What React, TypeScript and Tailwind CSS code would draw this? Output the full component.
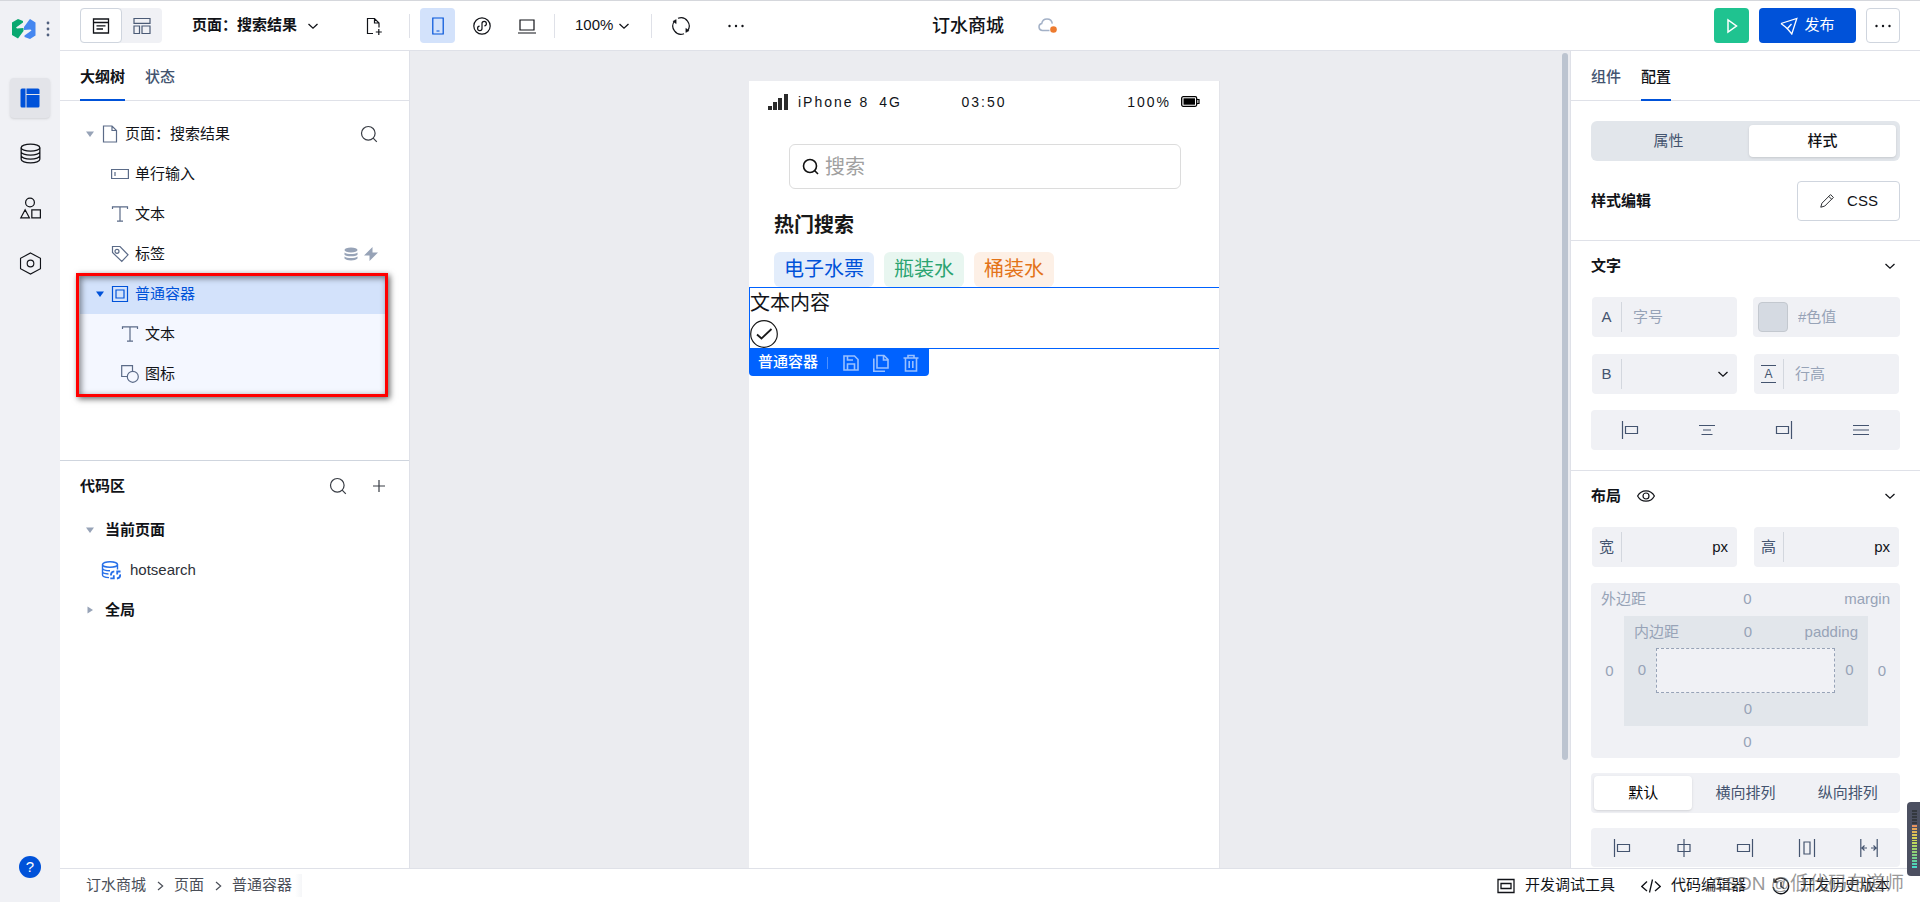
import React from 'react';

type IconProps = { className?: string; size?: number; children: React.ReactNode; w?: number };

const Icon: React.FC<IconProps> = ({ className = '', size = 18, w = 1.2, children }) => (
  <svg
    width={size}
    height={size}
    viewBox="0 0 18 18"
    fill="none"
    stroke="currentColor"
    strokeWidth={w}
    className={`shrink-0 ${className}`}
    aria-hidden="true"
  >
    {children}
  </svg>
);

const Chevron = () => (
  <svg width="12" height="12" viewBox="0 0 12 12" fill="none" stroke="currentColor" strokeWidth="1.3" className="shrink-0" aria-hidden="true">
    <path d="M1.5 4 6 8.2 10.5 4" />
  </svg>
);

const Caret: React.FC<{ right?: boolean; className?: string }> = ({ right, className = '' }) => (
  <svg width="10" height="10" viewBox="0 0 10 10" fill="currentColor" className={`shrink-0 ${className}`} aria-hidden="true">
    {right ? <path d="M2.500 1.500v7L8 5z" /> : <path d="M1 2.500h8L5 8z" />}
  </svg>
);

const SearchIcon = ({ w = 1.2 }: { w?: number }) => (
  <Icon w={w}>
    <circle cx="8.300" cy="8.300" r="6.800" />
    <path d="m13.200 13.200 3.600 3.600" />
  </Icon>
);

const FileIcon = () => (
  <Icon>
    <path d="M2.500 1h8.500l4.500 4.500V17h-13zM11 1v4.500h4.500" />
  </Icon>
);

const TextIcon = () => (
  <Icon>
    <path d="M1.500 4V1.800h15V4M9 1.800v14.400M6 16.200h6" />
  </Icon>
);

const Dots = () => (
  <svg width="18" height="4" viewBox="0 0 18 4" fill="currentColor" aria-hidden="true">
    <circle cx="2.500" cy="2" r="1.200" />
    <circle cx="9" cy="2" r="1.200" />
    <circle cx="15.500" cy="2" r="1.200" />
  </svg>
);

const Database: React.FC<{ size?: number }> = ({ size = 20 }) => (
  <Icon size={size} w={1.1}>
    <ellipse cx="9" cy="4" rx="8" ry="3" />
    <path d="M1 4v10c0 1.600 3.600 3 8 3s8-1.400 8-3V4M1 7.400c0 1.600 3.600 3 8 3s8-1.400 8-3M1 10.800c0 1.600 3.600 3 8 3s8-1.400 8-3" />
  </Icon>
);

const AlignLeft = () => (
  <Icon>
    <path d="M1.500 0v18M4.500 5.500h12v7h-12z" />
  </Icon>
);

const AlignRight = () => (
  <Icon>
    <path d="M16.500 0v18M1.500 5.500h12v7h-12z" />
  </Icon>
);

const SideRail = () => (
  <nav className="w-15 shrink-0 bg-[#f0f1f5] flex flex-col items-center">
    <div className="w-full h-11 mt-1.5 flex items-center pl-3 gap-2.5">
      <svg width="24" height="20" viewBox="0 0 24 20" aria-hidden="true">
        <path d="M0 3.500 6 0l5 2v1.500L4 8.500l1 1 6.500-.5v3L6 19.500 0 16z" fill="#09a870" />
        <path d="M23.500 16.500 18 20l-5.500-2v-1.500l7-5-1-1-6.500.5V8l5.500-7.500L18 0l5.500 3.500z" fill="#4587f0" />
      </svg>
      <svg width="4" height="16" viewBox="0 0 4 16" fill="#50607e" aria-hidden="true">
        <circle cx="2" cy="2" r="1.400" />
        <circle cx="2" cy="8" r="1.400" />
        <circle cx="2" cy="14" r="1.400" />
      </svg>
    </div>
    <div className="mt-[27px] flex flex-col gap-[15px]">
      <button aria-label="页面" className="size-10 rounded bg-[#e3e4e9] shadow flex items-center justify-center text-[#0052d9]">
        <svg width="20" height="20" viewBox="0 0 20 20" fill="currentColor" aria-hidden="true">
          <path d="M2 .5h3.500v19H2a1.500 1.500 0 0 1-1.500-1.500V2A1.500 1.500 0 0 1 2 .5zM6.500.500H18A1.500 1.500 0 0 1 19.500 2v4h-13zM6.500 7h13v11a1.500 1.500 0 0 1-1.500 1.500H6.500z" />
        </svg>
      </button>
      <button aria-label="数据源" className="size-10 flex items-center justify-center">
        <Database size={21} />
      </button>
      <button aria-label="素材" className="size-10 flex items-center justify-center">
        <Icon size={22} w={1}>
          <circle cx="9" cy="4.500" r="3.600" />
          <path d="M5 10.500 8.500 17h-7zM10.500 10.500h7V17h-7z" />
        </Icon>
      </button>
      <button aria-label="设置" className="size-10 flex items-center justify-center">
        <Icon size={23} w={0.9}>
          <path d="m9 .8 7.800 4.100v8.200L9 17.200l-7.800-4.100V4.900z" />
          <circle cx="9" cy="9" r="2.600" />
        </Icon>
      </button>
    </div>
    <button aria-label="帮助" className="mt-auto mb-6 size-[22px] rounded-full bg-[#0052d9] text-white text-[15px] leading-[22px]">?</button>
  </nav>
);

const Divider = () => <span className="w-px h-6 bg-[#dfe1e8]" />;

const Header = () => (
  <header className="h-[50px] shrink-0 border-b border-[#dfe1e8] bg-white flex items-center px-5">
    <div className="flex-1 flex items-center">
      <div className="flex h-[35px] rounded bg-[#f0f1f5]">
        <button aria-label="列表视图" className="w-[42px] rounded border border-[#cfd5de] bg-white flex items-center justify-center">
          <Icon w={1.3}>
            <path d="M1.500 2h15v14h-15zM1.500 5.500h15M4.500 8.800h9M4.500 12h6.500" />
          </Icon>
        </button>
        <button aria-label="布局视图" className="w-10 flex items-center justify-center text-[#4b5b76]">
          <Icon>
            <path d="M1 1.500h16v4.800H1zM1 9h5.500v7.500H1zM9 9h8v7.500H9z" />
          </Icon>
        </button>
      </div>
      <label className="ml-[30px] flex items-center gap-2.5">
        <select aria-label="当前页面" className="appearance-none bg-transparent text-[15px] font-semibold w-[105px]">
          <option>页面：搜索结果</option>
        </select>
        <Chevron />
      </label>
      <button aria-label="新建页面" className="ml-[46px] mr-[26px]">
        <Icon>
          <path d="M8 16.500H2.500v-15h7l4.500 4.500v4.500M9.500 1.500V6H14M13.800 12v6M10.800 15h6" />
        </Icon>
      </button>
      <Divider />
      <button aria-label="手机" className="ml-2.5 size-[35px] rounded bg-[#d3e2fb] text-[#0052d9] flex items-center justify-center">
        <Icon>
          <path d="M3.800 1h10.400v16H3.800zM7.500 14h3" />
        </Icon>
      </button>
      <button aria-label="小程序" className="ml-[18px]">
        <Icon>
          <circle cx="9" cy="9" r="8.200" />
          <path d="M6.600 9.200a2.200 2.200 0 1 0 2.400 2.200V6.600a2.200 2.200 0 1 1 2.400 2.200" />
        </Icon>
      </button>
      <button aria-label="电脑" className="ml-[27px] mr-[18px]">
        <Icon>
          <path d="M2 3h14v10H2zM0 16h18" />
        </Icon>
      </button>
      <Divider />
      <label className="ml-5 mr-[21px] flex items-center gap-1">
        <select aria-label="缩放" className="appearance-none bg-transparent text-[15px]">
          <option>100%</option>
        </select>
        <Chevron />
      </label>
      <Divider />
      <button aria-label="刷新" className="ml-5">
        <Icon>
          <path d="M6 1.300A8.200 8.200 0 0 1 15.400 14M12 16.700A8.200 8.200 0 0 1 2.600 4" />
          <path d="M13.800 11.300v4.200l3.300-1.800zM4.200 6.700V2.500L.900 4.300z" fill="currentColor" strokeWidth=".4" />
        </Icon>
      </button>
      <button aria-label="更多操作" className="ml-[37px]">
        <Dots />
      </button>
    </div>
    <div className="pl-2.5 flex items-center gap-[34px]">
      <h1 className="text-lg font-medium">订水商城</h1>
      <svg width="20" height="16" viewBox="0 0 20 16" fill="none" aria-hidden="true">
        <path d="M11.500 12.500H4.500a3.500 3.500 0 0 1-.8-6.900C4.200 2.800 6.300 1 9 1c2.800 0 4.900 1.900 5.300 4.600" stroke="#a3b1c7" strokeWidth="1.500" />
        <circle cx="15.500" cy="11.500" r="3.300" fill="#ed7b2f" />
      </svg>
    </div>
    <div className="flex-1 flex items-center justify-end gap-2.5">
      <button aria-label="预览" className="size-[35px] rounded bg-[#1fc390] text-white flex items-center justify-center">
        <Icon w={1.5}>
          <path d="M5 3v12l8.500-6z" />
        </Icon>
      </button>
      <button className="h-[35px] w-[97px] rounded bg-[#0052d9] text-white text-[15px] flex items-center justify-center gap-1.5">
        <Icon w={1.3}>
          <path d="M1 6.500 16.800 1.500 11.800 17 8.500 13M1 6.500l4.500 3.500M5.500 10l3 3M7.500 11.500 11.500 7" />
        </Icon>
        发布
      </button>
      <button aria-label="更多" className="h-[35px] w-[34px] rounded border border-[#cfd5de] flex items-center justify-center">
        <Dots />
      </button>
    </div>
  </header>
);

const TreeRow: React.FC<{ icon: React.ReactNode; label: string; className?: string; children?: React.ReactNode }> = ({ icon, label, className = 'pl-8', children }) => (
  <li className={`h-10 flex items-center text-[15px] ${className}`}>
    <button className="flex items-center gap-1.5">
      <span className="text-[#5b6b88]">{icon}</span>
      {label}
    </button>
    {children}
  </li>
);

const LeftPanel = () => (
  <aside className="w-[350px] shrink-0 bg-white border-r border-[#dfe1e8] flex flex-col">
    <div className="h-[50px] shrink-0 border-b border-[#dfe1e8] px-5 flex gap-5 text-[15px] font-medium">
      <button className="h-[50px] pt-1 border-b-2 border-[#0052d9] font-semibold">大纲树</button>
      <button className="h-[50px] pt-0.5 text-[#44546f]">状态</button>
    </div>
    <div className="h-[359px] shrink-0 pt-[13px] pl-5 pr-[21px]">
      <ul>
        <li className="h-10 flex items-center pl-[5px] pr-2.5 text-[15px]">
          <Caret className="text-[#97a3b7]" />
          <button className="ml-1.5 flex items-center gap-1.5">
            <span className="text-[#5b6b88]">
              <FileIcon />
            </span>
            页面：搜索结果
          </button>
          <button aria-label="搜索组件" className="ml-auto text-[#383c44]">
            <SearchIcon />
          </button>
        </li>
        <TreeRow
          label="单行输入"
          className="pl-[31px]"
          icon={
            <Icon>
              <path d="M.600 4.500h16.800v9H.600zM4 7v4" />
            </Icon>
          }
        />
        <TreeRow label="文本" className="pl-[31px]" icon={<TextIcon />} />
        <TreeRow
          label="标签"
          className="pl-[31px] pr-2.5"
          icon={
            <Icon>
              <path d="M1.500 1.500h7.500l8 8.300-6.200 6.700-9.300-9z" />
              <circle cx="6" cy="6.300" r="2" />
            </Icon>
          }
        >
          <span className="ml-auto flex gap-1.5 text-[#97a3b7]">
            <svg width="14" height="14" viewBox="0 0 14 14" fill="currentColor" aria-hidden="true">
              <ellipse cx="7" cy="3" rx="6.500" ry="2.600" />
              <path d="M.500 5.500c2.500 2 10.500 2 13 0v2.200c-2 2.200-11 2.200-13 0zM.500 9.500c2.500 2 10.500 2 13 0v2c-2 2.600-11 2.600-13 0z" />
            </svg>
            <svg width="14" height="14" viewBox="0 0 14 14" fill="currentColor" aria-hidden="true">
              <path d="M8.500 0 0 8.500h5.500V14L14 5.500H8.500z" />
            </svg>
          </span>
        </TreeRow>
        <li className="relative">
          <ul>
            <li className="h-10 rounded-t bg-[#d3e2fb] flex items-center pl-[15px] text-[15px] text-[#0052d9]">
              <Caret />
              <button className="ml-1.5 flex items-center gap-1.5">
                <Icon>
                  <path d="M1.500 1.500h15v15h-15zM5 5h8v8H5z" />
                </Icon>
                普通容器
              </button>
            </li>
            <TreeRow label="文本" className="pl-[41px] bg-[#f4f7ff]" icon={<TextIcon />} />
            <TreeRow
              label="图标"
              className="pl-[41px] bg-[#f4f7ff]"
              icon={
                <Icon>
                  <path d="M7 11.500H.700V.700h10.800v6" />
                  <circle cx="11.800" cy="11.800" r="5.500" />
                </Icon>
              }
            />
          </ul>
          <div className="absolute -left-1 right-0 -top-px -bottom-[3px] border-3 border-[#ff0000] shadow-[2px_2px_6px_rgba(0,0,0,0.6),inset_2px_2px_6px_rgba(0,0,0,0.5)] pointer-events-none" />
        </li>
      </ul>
    </div>
    <section className="border-t border-[#cfd5de] flex-1 min-h-0">
      <div className="h-[49px] pt-px pl-5 pr-[21px] flex items-center text-[15px]">
        <h2 className="font-semibold">代码区</h2>
        <button aria-label="搜索代码" className="ml-auto text-[#383c44]">
          <SearchIcon />
        </button>
        <button aria-label="新建" className="ml-[23px] text-[#383c44]">
          <Icon>
            <path d="M9 3v12M3 9h12" />
          </Icon>
        </button>
      </div>
      <ul className="text-[15px]">
        <li className="h-10 pl-[25px] flex items-center gap-2.5 font-semibold">
          <Caret className="text-[#97a3b7]" />
          <button>当前页面</button>
        </li>
        <li className="h-10 pl-[41px] flex items-center gap-[9px]">
          <svg width="20" height="20" viewBox="0 0 20 20" fill="none" stroke="#266fe8" strokeWidth="1.400" aria-hidden="true">
            <ellipse cx="9" cy="4.500" rx="7.500" ry="2.800" />
            <path d="M1.500 4.500v10.500c0 1.500 3 2.500 6.500 2.600M16.500 4.500v5M1.500 8c0 1.600 3.400 2.700 7.500 2.700M1.500 11.500c0 1.300 2.500 2.300 6 2.500" />
            <path d="M10 15.500c-.200-2.300 1.300-4 3.300-4.200M19.200 14.300c.200 2.300-1.300 4-3.300 4.200M9.300 18.300h3.500v-3M19.500 11.500H16.200v3" strokeWidth="1.800" />
          </svg>
          <button className="text-[#2c3038]">hotsearch</button>
        </li>
        <li className="h-10 pl-[25px] flex items-center gap-2.5 font-semibold">
          <Caret right className="text-[#97a3b7]" />
          <button>全局</button>
        </li>
      </ul>
    </section>
  </aside>
);

const Canvas = () => (
  <main className="flex-1 min-w-0 bg-[#ebecf0] flex">
    <div className="flex-1 pt-[30px] flex justify-center pr-[3px]">
      <div className="w-[471px] bg-white border-r border-[#e3e4e9]">
        <div className="h-[43px] pb-0.5 px-[19px] grid grid-cols-3 items-center text-sm leading-5 tracking-[2px]">
          <div className="flex items-center gap-2.5">
            <svg width="20" height="16" viewBox="0 0 20 16" fill="#2b2b2b" aria-hidden="true">
              <path d="M0 12h4v4H0zM5 8h4v8H5zM10 4h4v12h-4zM16 0h4v16h-4z" />
            </svg>
            <span>iPhone 8</span>
            <span>4G</span>
          </div>
          <span className="text-center">03:50</span>
          <div className="flex items-center justify-end gap-2.5">
            100%
            <svg width="19" height="11" viewBox="0 0 19 11" aria-hidden="true">
              <rect x=".7" y=".7" width="15" height="9.600" rx="1.500" fill="none" stroke="#000" strokeWidth="1.300" />
              <rect x="2.500" y="2.300" width="11.500" height="6.400" />
              <path d="M16 3.500h2v4h-2" fill="none" stroke="#000" strokeWidth="1.200" />
            </svg>
          </div>
        </div>
        <label className="mt-5 ml-10 mr-[38px] h-[45px] rounded-md border border-[#dcdcdc] pl-3 flex items-center gap-1.5">
          <svg width="17" height="17" viewBox="0 0 17 17" fill="none" stroke="#111" strokeWidth="1.600" aria-hidden="true">
            <circle cx="8" cy="8" r="6.500" />
            <path d="m12.500 12.500 3.500 3.500" />
          </svg>
          <input aria-label="搜索" placeholder="搜索" className="flex-1 min-w-0 bg-transparent text-xl outline-none placeholder:text-[#a0a0a0]" />
        </label>
        <h2 className="mt-[21px] pl-[25px] text-xl leading-[30px] font-semibold text-[#181818]">热门搜索</h2>
        <div className="mt-3 pl-[25px] flex gap-2.5 text-xl leading-[35px]">
          <span className="px-2.5 rounded-md bg-[#e3edfb] text-[#0052d9]">电子水票</span>
          <span className="px-2.5 rounded-md bg-[#e8f6f0] text-[#2ba471]">瓶装水</span>
          <span className="px-2.5 rounded-md bg-[#fdf0e6] text-[#e37318]">桶装水</span>
        </div>
        <div className="h-[62px] border-y border-l border-[#0062ff]">
          <p className="pb-0.5 text-xl leading-[30px]">文本内容</p>
          <svg width="28" height="28" viewBox="0 0 28 28" fill="none" stroke="#181818" aria-hidden="true">
            <circle cx="14" cy="14" r="13.300" strokeWidth="1.200" />
            <path d="m7 14.500 4.500 4L21.500 9" strokeWidth="1.800" />
          </svg>
        </div>
        <div className="h-[27px] w-[180px] rounded-b bg-[#0062ff] flex items-center pl-[9px] text-[15px] text-white">
          <span className="font-medium">普通容器</span>
          <span className="ml-[9px] w-px h-3 bg-[#4d91ff]" />
          <div className="ml-3.5 flex gap-3 text-[#99c0ff]">
            <button aria-label="保存">
              <Icon w={1.6}>
                <path d="M2 2h10.500L16 5.500V16H2zM5.500 16v-6h7v6M5.500 2v4h5.500" />
              </Icon>
            </button>
            <button aria-label="复制">
              <Icon w={1.6}>
                <path d="M5 1.500h7l4 4V14H5zM11.500 1.500V6H16M1.800 4.500v12.700H13" />
              </Icon>
            </button>
            <button aria-label="删除">
              <Icon w={1.6}>
                <path d="M1.500 4h15M6 4V1.500h6V4M3.500 4v13h11V4M7.200 7v7M10.800 7v7" />
              </Icon>
            </button>
          </div>
        </div>
      </div>
    </div>
    <div className="w-2 pt-0.5">
      <div className="w-1.5 h-[707px] rounded-full bg-[#bcc4d0]" />
    </div>
  </main>
);

const Field: React.FC<{ prefix: React.ReactNode; name: string; placeholder?: string; unit?: string; select?: boolean }> = ({ prefix, name, placeholder, unit, select }) => (
  <label className="h-10 min-w-0 rounded bg-[#f0f1f5] flex items-center text-[15px] mx-px">
    <span className="w-[29px] shrink-0 flex justify-center text-[#44546f]">{prefix}</span>
    <span className="w-px h-[30px] shrink-0 bg-[#d3d7de]" />
    {select ? (
      <select aria-label={name} className="flex-1 min-w-0 appearance-none bg-transparent pl-3">
        <option value="" />
      </select>
    ) : (
      <input aria-label={name} placeholder={placeholder} className="flex-1 min-w-0 bg-transparent pl-[11px] outline-none placeholder:text-[#97a3b7]" />
    )}
    {unit && <span className="pr-[9px]">{unit}</span>}
    {select && <span className="pr-2"><Chevron /></span>}
  </label>
);

const SectionTitle: React.FC<{ title: string; children?: React.ReactNode }> = ({ title, children }) => (
  <div className="h-[50px] flex items-center gap-4 pr-1">
    <h2 className="text-[15px] font-bold">{title}</h2>
    {children}
    <button aria-label={`收起${title}`} className="ml-auto">
      <Chevron />
    </button>
  </div>
);

const RightPanel = () => (
  <aside className="w-[350px] shrink-0 bg-white border-l border-[#dfe1e8] overflow-hidden">
    <div className="h-[50px] border-b border-[#dfe1e8] px-5 flex gap-5 text-[15px] font-medium">
      <button className="h-[50px] pt-0.5 text-[#44546f]">组件</button>
      <button className="h-[50px] pt-1 border-b-2 border-[#0052d9]">配置</button>
    </div>
    <div className="px-5 pt-5 pb-[19px]">
      <div className="h-10 rounded-md bg-[#e2e6eb] p-1 flex justify-between text-[15px]">
        <button className="w-[147px] text-[#44546f]">属性</button>
        <button className="w-[147px] rounded-sm bg-white shadow-sm font-medium">样式</button>
      </div>
      <div className="mt-5 flex items-center justify-between text-[15px]">
        <span className="font-semibold">样式编辑</span>
        <button className="h-10 w-[103px] rounded border border-[#cfd5de] flex items-center justify-center gap-3">
          <Icon size={16} w={1}>
            <path d="m2 16 1.300-4.500L13 1.800l3.200 3.200L6.500 14.700zM11 3.800 14.200 7" />
          </Icon>
          CSS
        </button>
      </div>
    </div>
    <section className="border-t border-[#dfe1e8] px-5 pb-5">
      <SectionTitle title="文字" />
      <div className="mt-1.5 grid grid-cols-2 gap-x-[15px] gap-y-[17px]">
        <Field prefix="A" name="字号" placeholder="字号" />
        <label className="h-10 min-w-0 rounded bg-[#f0f1f5] flex items-center gap-2.5 px-[5px] text-[15px]">
          <span className="size-[30px] shrink-0 rounded bg-[#d5dae2] border border-[#c3c8cf]" />
          <input aria-label="色值" placeholder="#色值" className="flex-1 min-w-0 bg-transparent outline-none placeholder:text-[#97a3b7]" />
        </label>
        <Field prefix="B" name="字重" select />
        <Field
          prefix={
            <span className="w-[15px] border-y border-[#44546f] text-center text-xs leading-4">A</span>
          }
          name="行高"
          placeholder="行高"
        />
      </div>
      <div className="mt-4 h-10 rounded bg-[#f0f1f5] grid grid-cols-4 text-[#44546f]">
        <button aria-label="左对齐" className="flex items-center justify-center">
          <AlignLeft />
        </button>
        <button aria-label="居中" className="flex items-center justify-center">
          <Icon>
            <path d="M1 4.500h16M5 9h8M3.500 13.500h11" />
          </Icon>
        </button>
        <button aria-label="右对齐" className="flex items-center justify-center">
          <AlignRight />
        </button>
        <button aria-label="两端对齐" className="flex items-center justify-center">
          <Icon>
            <path d="M1 4.500h16M1 9h16M1 13.500h16" />
          </Icon>
        </button>
      </div>
    </section>
    <section className="border-t border-[#dfe1e8] px-5">
      <SectionTitle title="布局">
        <Icon>
          <path d="M.600 9C2.500 5.500 5.500 3.800 9 3.800s6.500 1.700 8.400 5.200c-1.900 3.500-4.900 5.200-8.400 5.200S2.500 12.500.600 9z" />
          <circle cx="9" cy="9" r="3" />
        </Icon>
      </SectionTitle>
      <div className="mt-1.5 grid grid-cols-2 gap-[15px]">
        <Field prefix="宽" name="宽" unit="px" />
        <Field prefix="高" name="高" unit="px" />
      </div>
      <div className="mt-4 rounded bg-[#f0f1f5] text-[15px] text-[#97a3b7]">
        <div className="h-[33px] px-2.5 grid grid-cols-3 items-center">
          <span>外边距</span>
          <span className="text-center pl-1">0</span>
          <span className="text-right">margin</span>
        </div>
        <div className="flex items-center">
          <span className="w-[33px] text-center pl-1">0</span>
          <div className="flex-1 bg-[#e2e6eb]">
            <div className="h-8 px-2.5 grid grid-cols-3 items-center">
              <span>内边距</span>
              <span className="text-center pl-1">0</span>
              <span className="text-right">padding</span>
            </div>
            <div className="flex items-center">
              <span className="w-8 text-center pl-1">0</span>
              <div className="flex-1 h-[45px] bg-[#f0f1f5] border border-dashed border-[#97a3b7]" />
              <span className="w-[33px] text-center pr-1">0</span>
            </div>
            <div className="h-[33px] pl-1 flex items-center justify-center">0</div>
          </div>
          <span className="w-8 text-center pr-1">0</span>
        </div>
        <div className="h-8 pl-1 flex items-center justify-center">0</div>
      </div>
      <div className="mt-[15px] h-10 rounded bg-[#f0f1f5] p-[3px] grid grid-cols-3 gap-1 text-[15px] text-[#44546f]">
        <button className="rounded bg-white shadow-sm text-black">默认</button>
        <button>横向排列</button>
        <button>纵向排列</button>
      </div>
      <div className="mt-[15px] h-[39px] rounded bg-[#f0f1f5] grid grid-cols-5 text-[#44546f]">
        <button aria-label="居左" className="flex items-center justify-center">
          <AlignLeft />
        </button>
        <button aria-label="水平居中" className="flex items-center justify-center">
          <Icon>
            <path d="M9 0v18M3 5.500h12v7H3z" />
          </Icon>
        </button>
        <button aria-label="居右" className="flex items-center justify-center">
          <AlignRight />
        </button>
        <button aria-label="环绕" className="flex items-center justify-center">
          <Icon>
            <path d="M1.500 0v18M16.500 0v18M6 3h6v12H6z" />
          </Icon>
        </button>
        <button aria-label="两端" className="flex items-center justify-center">
          <Icon>
            <path d="M.800 0v18M17.200 0v18M2 9h5M4.500 6.500 2 9l2.500 2.500M16 9h-5M13.500 6.500 16 9l-2.500 2.500" />
          </Icon>
        </button>
      </div>
    </section>
  </aside>
);

const Footer = () => (
  <footer className="h-[34px] shrink-0 border-t border-[#dfe1e8] bg-white flex items-center pl-[26px] pr-[30px] text-[15px]">
    <nav className="flex items-center gap-2 text-[#4b4f58]">
      <a href="#app">订水商城</a>
      <Icon size={12} w={1.8}>
        <path d="m6 3 7 6-7 6" />
      </Icon>
      <a href="#page">页面</a>
      <Icon size={12} w={1.8}>
        <path d="m6 3 7 6-7 6" />
      </Icon>
      <a href="#container" className="pr-2.5 bg-linear-to-l from-[#f5f6f8] to-white to-10%">普通容器</a>
    </nav>
    <div className="ml-auto flex items-center gap-[26px]">
      <button className="flex items-center gap-2.5">
        <Icon w={1.3}>
          <path d="M1 2.500h16v13H1zM4 6.500h10v5H4z" />
        </Icon>
        开发调试工具
      </button>
      <button className="flex items-center gap-2.5">
        <svg width="20" height="14" viewBox="0 0 20 14" fill="none" stroke="currentColor" strokeWidth="1.300" aria-hidden="true">
          <path d="M6 2.500.800 7.500 6 12M14 2.500l5.200 5L14 12M11.500.500l-3 13" />
        </svg>
        代码编辑器
      </button>
      <button className="flex items-center gap-2.5">
        <Icon w={1.3}>
          <path d="M2.500 4.500A7.800 7.800 0 1 1 1.200 10M2 1.500v3.500h3.500M9 5v4.500l3 2" />
        </Icon>
        开发历史版本
      </button>
    </div>
  </footer>
);

const meterColors = ['#34383f', '#34383f', '#34383f', '#34383f', '#34383f', '#e8935f', '#e6a65b', '#e0b555', '#dcc656', '#d8d254', '#cfd858', '#bed75c', '#aed464', '#a0d26c', '#92d174', '#84d180', '#74d18e', '#62d29e', '#52d4b2', '#48dcc8'];

const App: React.FC = () => (
  <div className="relative h-screen overflow-hidden flex flex-col border-t border-[#d5d7dc] font-['Liberation_Sans','Noto_Sans_CJK_SC',sans-serif] text-[#111318]">
    <div className="flex-1 min-h-0 flex">
      <SideRail />
      <div className="flex-1 min-w-0 flex flex-col">
        <Header />
        <div className="flex-1 min-h-0 flex">
          <LeftPanel />
          <Canvas />
          <RightPanel />
        </div>
        <Footer />
      </div>
    </div>
    <div className="absolute right-4 bottom-1 text-[19px] leading-7 text-[#6b6b6b]/70 pointer-events-none">CSDN @低代码布道师</div>
    <div className="absolute right-0 bottom-[26px] w-[13px] h-[74px] rounded-l bg-[#4c5061] pl-[5px] pr-[3px] py-2 flex flex-col gap-px pointer-events-none">
      {meterColors.map((color, i) => (
        <span key={i} className="flex-1" style={{ backgroundColor: color }} />
      ))}
    </div>
  </div>
);

export default App;
